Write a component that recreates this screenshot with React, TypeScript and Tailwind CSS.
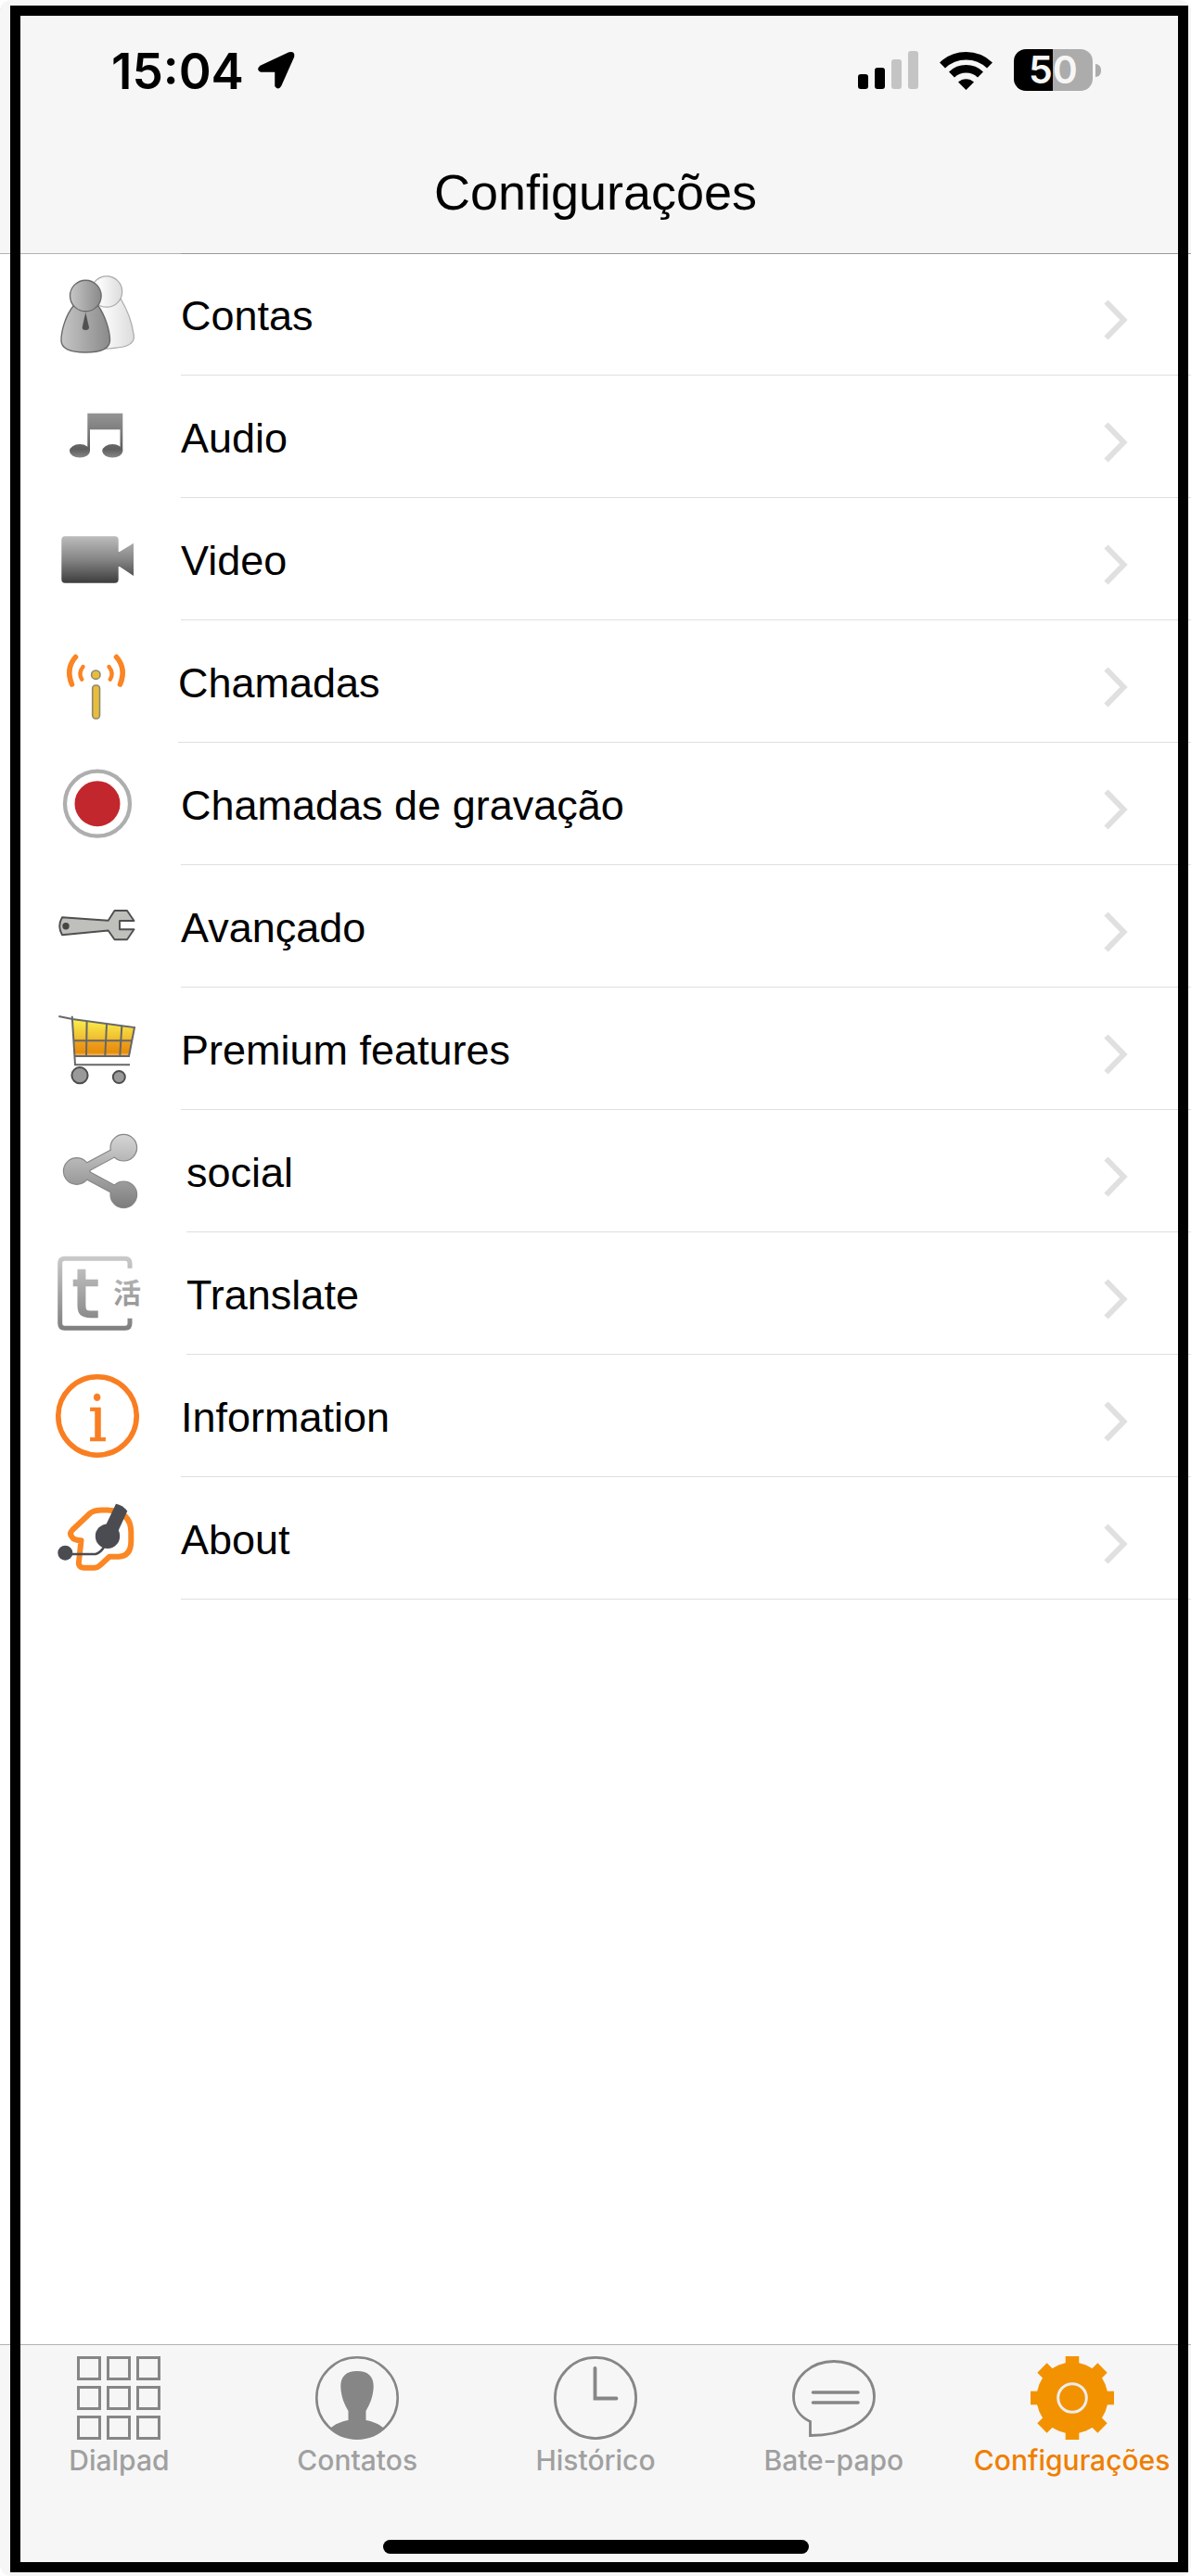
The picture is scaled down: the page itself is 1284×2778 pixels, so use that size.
import type { ReactNode } from "react";

function AccountsIcon() {
  return (
    <svg width="90" height="90" viewBox="0 0 90 90" aria-hidden="true">
      <defs>
        <linearGradient id="acc-front">
          <stop offset="0" stopColor="#c6c6c6" />
          <stop offset="1" stopColor="#8a8a8a" />
        </linearGradient>
        <linearGradient id="acc-back">
          <stop offset="0.3" stopColor="#fafafa" />
          <stop offset="1" stopColor="#dcdcdc" />
        </linearGradient>
      </defs>
      <path d="M42 34 C36 50 40 82 57 82 C64 81 69 81 73 80 C81 78 86 74 84 66 C82 52 76 38 70 28 Z" fill="url(#acc-back)" stroke="#aaa" strokeWidth="1.2" />
      <circle cx="55" cy="20.5" r="16.7" fill="url(#acc-back)" stroke="#aaa" strokeWidth="1.2" />
      <path d="M19 36 C11 46 6 62 6 73 C6 82 16 86 32 86 C49 86 58.500 82 58.500 73 C58.500 62 53 46 46 36 Z" fill="url(#acc-front)" stroke="#6a6a6a" strokeWidth="1.4" />
      <circle cx="32.300" cy="25" r="16.8" fill="url(#acc-front)" stroke="#6a6a6a" strokeWidth="1.4" />
      <path d="M32.300 43 L36 59 Q36 62 32.300 62 Q28.500 62 28.700 59 Z" fill="#505050" />
    </svg>
  );
}

function AudioIcon() {
  return (
    <svg width="90" height="90" viewBox="0 0 90 90" aria-hidden="true">
      <defs>
        <linearGradient id="aud" gradientUnits="userSpaceOnUse" x1="0" y1="20" x2="0" y2="68">
          <stop offset="0" stopColor="#949494" />
          <stop offset="0.4" stopColor="#7c7c7c" />
          <stop offset="0.8" stopColor="#5e5e5e" />
          <stop offset="1" stopColor="#8a8a8a" />
        </linearGradient>
      </defs>
      <g fill="url(#aud)">
        <path d="M34.300 19.700 H72.300 V60 H69.500 V37.300 H37 V60 H34.300 Z" />
        <ellipse cx="26" cy="60.300" rx="11" ry="7.300" />
        <ellipse cx="61.300" cy="60.300" rx="11" ry="7.300" />
      </g>
    </svg>
  );
}

function VideoIcon() {
  return (
    <svg width="90" height="90" viewBox="0 0 90 90" aria-hidden="true">
      <defs>
        <linearGradient id="vid" gradientUnits="userSpaceOnUse" x1="0" y1="20" x2="0" y2="71">
          <stop offset="0" stopColor="#bdbdbd" />
          <stop offset="0.5" stopColor="#858585" />
          <stop offset="1" stopColor="#3c3c3c" />
        </linearGradient>
      </defs>
      <rect x="6.300" y="20.300" width="61.400" height="50.400" rx="4" fill="url(#vid)" />
      <path d="M67 37 L69 37 L84 27.700 V63 L69 53 L67 53 Z" fill="url(#vid)" />
    </svg>
  );
}

function CallsIcon() {
  return (
    <svg width="87" height="90" viewBox="0 0 87 90" aria-hidden="true">
      <g fill="none" stroke="#fb8423" strokeLinecap="round">
        <path d="M21.500 18.500 Q10.500 31 17.500 48" strokeWidth="5.600" />
        <path d="M29.500 29 Q24 36 28.300 42.700" strokeWidth="4.400" />
        <path d="M65.500 18.500 Q76.500 31 69.500 48" strokeWidth="5.600" />
        <path d="M57.500 29 Q63 36 58.700 42.700" strokeWidth="4.400" />
      </g>
      <circle cx="43.300" cy="37.700" r="4.700" fill="#e7bd3d" stroke="#8d8873" strokeWidth="1.600" />
      <rect x="39.700" y="49" width="7.800" height="36" rx="3.400" fill="#e7bd3d" stroke="#8d8873" strokeWidth="1.600" />
    </svg>
  );
}

function RecordIcon() {
  return (
    <svg width="90" height="90" viewBox="0 0 90 90" aria-hidden="true">
      <circle cx="45" cy="44.700" r="35" fill="#fff" stroke="#aeaeae" strokeWidth="4.300" />
      <circle cx="45" cy="44.700" r="24.500" fill="#c1272d" />
    </svg>
  );
}

function WrenchIcon() {
  return (
    <svg width="90" height="90" viewBox="0 0 90 90" aria-hidden="true">
      <path
        d="M7 35.300 L56.700 38.700 L63.500 28 H77 L84.500 39 H69 V48.300 H84.500 L77 59.300 H63.500 L56.700 49.500 L7 54.300 Q1.500 44.700 7 35.300 Z"
        fill="#bfc0bb"
        stroke="#4f4f4f"
        strokeWidth="1.900"
        strokeLinejoin="round"
      />
      <circle cx="11" cy="44.700" r="3.700" fill="#454545" />
    </svg>
  );
}

function CartIcon() {
  return (
    <svg width="90" height="90" viewBox="0 0 90 90" aria-hidden="true">
      <defs>
        <linearGradient id="cart" gradientUnits="userSpaceOnUse" x1="0" y1="14" x2="0" y2="53">
          <stop offset="0" stopColor="#faee4c" />
          <stop offset="0.5" stopColor="#f0bf30" />
          <stop offset="0.600" stopColor="#eba020" />
          <stop offset="0.900" stopColor="#e88e08" />
          <stop offset="1" stopColor="#f3c48a" />
        </linearGradient>
      </defs>
      <path d="M18 13 L85 22 L79 53 H21 Z" fill="url(#cart)" />
      <g fill="none" stroke="#676767" strokeWidth="2">
        <path d="M3.300 10 L18 13 L85 22 L79 53 H21" />
        <path d="M17.700 9.700 L21 62.300 H80" />
        <path d="M19 36.300 H82" />
        <path d="M33.600 15.500 L33 52.500 M55 18.500 L53.300 52.500 M71.300 20.500 L69.300 52.500" />
      </g>
      <circle cx="26" cy="73.700" r="8.600" fill="#999" stroke="#4d4d4d" strokeWidth="2" />
      <circle cx="68.300" cy="75.500" r="6.500" fill="#999" stroke="#4d4d4d" strokeWidth="2" />
    </svg>
  );
}

function ShareIcon() {
  return (
    <svg width="96" height="90" viewBox="0 0 96 90" aria-hidden="true">
      <defs>
        <linearGradient id="share" gradientUnits="userSpaceOnUse" x1="0" y1="5" x2="0" y2="86">
          <stop offset="0" stopColor="#d6d6d6" />
          <stop offset="1" stopColor="#7b7b7b" />
        </linearGradient>
      </defs>
      <path d="M73.300 19.700 L26 45 L73.300 70.300" fill="none" stroke="#858585" strokeWidth="10" strokeLinejoin="round" />
      <g fill="url(#share)" stroke="#858585" strokeWidth="1.200">
        <circle cx="73.300" cy="19.700" r="14.300" />
        <circle cx="22.700" cy="45" r="14.300" />
        <circle cx="73.300" cy="70.300" r="14.300" />
      </g>
      <path d="M73.300 19.700 L26 45 L73.300 70.300" fill="none" stroke="url(#share)" strokeWidth="7.800" strokeLinejoin="round" />
    </svg>
  );
}

function TranslateIcon() {
  return (
    <svg width="96" height="90" viewBox="0 0 96 90" aria-hidden="true">
      <defs>
        <linearGradient id="tr" gradientUnits="userSpaceOnUse" x1="0" y1="4" x2="0" y2="85">
          <stop offset="0" stopColor="#cbcbcb" />
          <stop offset="1" stopColor="#7e7e7e" />
        </linearGradient>
      </defs>
      <path
        d="M80 17.700 V12 Q80 7.300 75 7.300 H9.700 Q4.700 7.300 4.700 12.300 V77 Q4.700 82.300 9.700 82.300 H75 Q80 82.300 80 77 V71.700"
        fill="none"
        stroke="url(#tr)"
        strokeWidth="5"
      />
      <text x="18" y="69.500" fontSize="72" fill="url(#tr)" stroke="url(#tr)" strokeWidth="2.400" className="font-['DejaVu_Sans',sans-serif]">t</text>
      <text x="62" y="55" fontSize="30" fill="url(#tr)" className="font-['Noto_Sans_CJK_SC',sans-serif] font-bold">活</text>
    </svg>
  );
}

function InfoIcon() {
  return (
    <svg width="90" height="90" viewBox="0 0 90 90" aria-hidden="true">
      <circle cx="45" cy="45" r="42.200" fill="none" stroke="#f97e22" strokeWidth="5.600" />
      <text x="45" y="72" fontSize="70" textAnchor="middle" fill="#f97e22" stroke="#f97e22" strokeWidth="0.600" className="font-['DejaVu_Serif_Condensed','DejaVu_Serif',serif]">i</text>
    </svg>
  );
}

function AboutIcon() {
  return (
    <svg width="90" height="90" viewBox="0 0 90 90" aria-hidden="true">
      <path
        d="M56 14.500 H50 Q41 14.500 37 18 L18 36 Q14 40 18 44 Q20 47 27.500 47.300 L25 70 Q24 76.700 31 76.700 H42 Q45 76.700 48 74 L58 64.700 H68 Q81.300 64 81.300 48 V38 Q81 16 56 14.500 Z"
        fill="none"
        stroke="#fa8723"
        strokeWidth="6"
        strokeLinejoin="round"
      />
      <path d="M65 7.700 Q72 9 77.300 15.500 L67 38 L53 33 Z" fill="#4b4c51" />
      <circle cx="56" cy="42.700" r="13.200" fill="#4b4c51" />
      <circle cx="10.300" cy="60.700" r="8" fill="#4b4c51" />
      <path d="M14 62 H43 Q48 61 53 53" fill="none" stroke="#4b4c51" strokeWidth="2.600" />
    </svg>
  );
}

function Chevron() {
  return (
    <svg width="26" height="44" viewBox="0 0 26 44" aria-hidden="true">
      <path d="M2.500 2.500 L21.500 22 L2.500 41.500" fill="none" stroke="#e0e0e0" strokeWidth="6" />
    </svg>
  );
}

type Setting = { label: string; icon: ReactNode };

const settings: Setting[] = [
  { label: "Contas", icon: <AccountsIcon /> },
  { label: "Audio", icon: <AudioIcon /> },
  { label: "Video", icon: <VideoIcon /> },
  { label: "Chamadas", icon: <CallsIcon /> },
  { label: "Chamadas de gravação", icon: <RecordIcon /> },
  { label: "Avançado", icon: <WrenchIcon /> },
  { label: "Premium features", icon: <CartIcon /> },
  { label: "social", icon: <ShareIcon /> },
  { label: "Translate", icon: <TranslateIcon /> },
  { label: "Information", icon: <InfoIcon /> },
  { label: "About", icon: <AboutIcon /> },
];

function SettingRow({ label, icon, first }: Setting & { first: boolean }) {
  return (
    <li>
      <button type="button" className="flex h-[132px] w-full items-center gap-[45px] pl-[60px] text-left">
        <span className="shrink-0">{icon}</span>
        <span
          className={
            first
              ? "flex h-full flex-1 items-center justify-between border-t border-b border-t-[#999] border-b-[#dfdfdf] pr-[68px]"
              : "flex h-full flex-1 items-center justify-between border-b border-[#dfdfdf] pr-[68px]"
          }
        >
          <span className="pt-[4px] text-[45px] leading-[52px]">{label}</span>
          <span className="pt-[12px]">
            <Chevron />
          </span>
        </span>
      </button>
    </li>
  );
}

function DialpadIcon() {
  const cells = [1.500, 33.500, 65.500];
  return (
    <svg width="90" height="90" viewBox="0 0 90 90" aria-hidden="true">
      {cells.map((y) =>
        cells.map((x) => (
          <rect key={`${x}-${y}`} x={x} y={y} width="23" height="23" fill="none" stroke="#868686" strokeWidth="3" />
        )),
      )}
    </svg>
  );
}

function ContactsIcon() {
  return (
    <svg width="90" height="90" viewBox="0 0 90 90" aria-hidden="true">
      <defs>
        <clipPath id="contact-clip">
          <circle cx="45" cy="45" r="44" />
        </clipPath>
      </defs>
      <circle cx="45" cy="45" r="43.700" fill="none" stroke="#868686" strokeWidth="2.600" />
      <path
        clipPath="url(#contact-clip)"
        d="M45 16 C57 16 63 22 62.700 33 C62.400 44 58 53 54.500 59 V69 C62 70.500 69 73 74 78 L70 90 H20 L16 78 C21 73 28 70.500 35.500 69 V59 C32 53 27.600 44 27.300 33 C27 22 33 16 45 16 Z"
        fill="#868686"
      />
    </svg>
  );
}

function HistoryIcon() {
  return (
    <svg width="90" height="90" viewBox="0 0 90 90" fill="none" stroke="#868686" aria-hidden="true">
      <circle cx="45" cy="45" r="43.600" strokeWidth="2.800" />
      <path d="M44.500 13 V45.500 H67.500" strokeWidth="3.800" strokeLinecap="round" />
    </svg>
  );
}

function ChatIcon() {
  return (
    <svg width="90" height="90" viewBox="0 0 90 90" fill="none" stroke="#868686" aria-hidden="true">
      <path d="M19.500 70.500 C8 65 1.500 55 1.500 43.500 C1.500 22 21 5.500 45 5.500 C69 5.500 88.500 22 88.500 43.500 C88.500 72 52 85.500 19.500 85.500 Z" strokeWidth="2.800" />
      <path d="M22.500 39 H71 M22.500 50 H71" strokeWidth="3.600" strokeLinecap="round" />
    </svg>
  );
}

function GearIcon() {
  return (
    <svg width="90" height="90" viewBox="0 0 90 90" aria-hidden="true">
      <g fill="#f39200">
        <circle cx="45" cy="45" r="38.500" />
        <rect x="37.700" y="0" width="14.600" height="90" />
        <rect x="0" y="37.700" width="90" height="14.600" />
        <rect x="37.700" y="-1" width="14.600" height="92" transform="rotate(45 45 45)" />
        <rect x="37.700" y="-1" width="14.600" height="92" transform="rotate(-45 45 45)" />
      </g>
      <circle cx="45" cy="45" r="15.300" fill="none" stroke="#ececec" strokeWidth="3" />
    </svg>
  );
}

const tabs = [
  { label: "Dialpad", icon: <DialpadIcon />, active: false },
  { label: "Contatos", icon: <ContactsIcon />, active: false },
  { label: "Histórico", icon: <HistoryIcon />, active: false },
  { label: "Bate-papo", icon: <ChatIcon />, active: false },
  { label: "Configurações", icon: <GearIcon />, active: true },
];

function StatusBar() {
  return (
    <div className="flex h-[141px] items-center justify-between pt-[10px] pr-[97px] pl-[120px]">
      <div className="flex items-center gap-[14px] font-['Inter',sans-serif]">
        <span className="pt-[2px] text-[53px] leading-[60px] font-semibold">15:04</span>
        <svg width="43" height="43" viewBox="0 0 43 43" aria-hidden="true">
          <path d="M4 18 L35 3.500 Q40 2 39 7 L25 38.500 Q23 42 20.500 38.500 V22.500 H4.500 Q0.500 21 4 18 Z" stroke="#000" strokeWidth="2.500" strokeLinejoin="round" />
        </svg>
      </div>
      <div className="flex items-center gap-[23px]">
        <svg width="65" height="42" viewBox="0 0 65 42" aria-hidden="true">
          <rect x="0" y="25" width="11" height="16" rx="3" />
          <rect x="18" y="18" width="11" height="23" rx="3" />
          <rect x="36" y="9" width="11" height="32" rx="3" fill="#c4c4c4" />
          <rect x="54" y="0" width="11" height="41" rx="3" fill="#c4c4c4" />
        </svg>
        <svg width="57" height="42" viewBox="0 0 57 42" aria-hidden="true">
          <g fill="none" stroke="#000" strokeWidth="8.600">
            <path d="M3 15.500 A37 37 0 0 1 54 15.500" />
            <path d="M13 25.500 A22.500 22.500 0 0 1 44 25.500" />
          </g>
          <path d="M28.500 42 L20 33.500 A12.500 12.500 0 0 1 37 33.500 Z" />
        </svg>
        <div className="flex items-center gap-[3px]">
          <div className="flex h-[45px] w-[85px] items-center justify-center rounded-[13px] bg-linear-to-r from-black from-50% to-[#acacac] to-50% font-['Inter',sans-serif] text-[41px] leading-[45px] font-semibold text-[#f6f6f6]">
            50
          </div>
          <div className="h-[14px] w-[6px] rounded-r-full bg-[#acacac]" />
        </div>
      </div>
    </div>
  );
}

export default function App() {
  return (
    <div className="relative flex min-h-screen flex-col bg-white font-['Liberation_Sans',Arial,sans-serif] text-black">
      <header className="rounded-t-[12px] bg-[#f6f6f6] shadow-[0_1px_0_#b2b2b2]">
        <StatusBar />
        <h1 className="flex h-[132px] items-center justify-center text-[54px] leading-[60px]">Configurações</h1>
      </header>

      <main className="flex-1">
        <ul>
          {settings.map((s, i) => (
            <SettingRow key={s.label} label={s.label} icon={s.icon} first={i === 0} />
          ))}
        </ul>
      </main>

      <footer className="flex h-[250px] flex-col items-center justify-between rounded-b-[12px] border-t border-[#b2b2b2] bg-[#f6f6f6] pt-[12px] pb-[24px]">
        <nav className="grid w-full grid-cols-5">
          {tabs.map((t) => (
            <button
              key={t.label}
              type="button"
              aria-current={t.active ? "page" : undefined}
              className={
                t.active
                  ? "flex flex-col items-center gap-[4px] font-['Inter',sans-serif] text-[30px] leading-[36px] font-medium text-[#ee7f00]"
                  : "flex flex-col items-center gap-[4px] font-['Inter',sans-serif] text-[30px] leading-[36px] font-medium text-[#a0a0a0]"
              }
            >
              {t.icon}
              <span>{t.label}</span>
            </button>
          ))}
        </nav>
        <div className="h-[15px] w-[459px] rounded-full bg-black" />
      </footer>

      <div className="pointer-events-none absolute top-[6px] right-[3px] bottom-[4px] left-[11px] border-[11px] border-black" />
    </div>
  );
}
